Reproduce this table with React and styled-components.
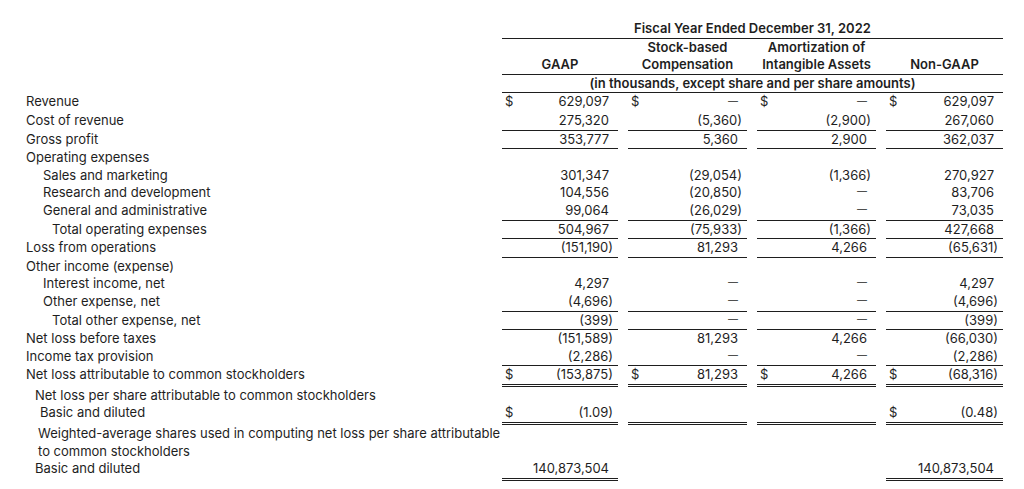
import React from 'react'
import styled, { createGlobalStyle } from 'styled-components'

const GlobalStyle = createGlobalStyle`
  html, body {
    margin: 0;
    padding: 0;
    background: #ffffff;
  }
  body {
    font-family: Inter, "Liberation Sans", Arial, sans-serif;
    color: #1e1e1e;
  }
`

const COLS = '466px 116px 119px 119px 117px'
const NUM_COLS = '116px 119px 119px 117px'

const Page = styled.div`
  padding: 20px 0 0 26px;
  font-size: 13px;
  line-height: 17.6px;
`

const Row = styled.div`
  display: grid;
  grid-template-columns: ${COLS};
  column-gap: 10px;
`

const Spanner = styled.div`
  grid-column: 2 / -1;
  text-align: center;
  font-weight: 600;
  border-bottom: 1px solid #1e1e1e;
`

const HeadGroup = styled.div`
  grid-column: 2 / -1;
  display: grid;
  grid-template-columns: ${NUM_COLS};
  column-gap: 10px;
  align-items: end;
  border-bottom: 1px solid #1e1e1e;
`

const HeadCell = styled.div`
  text-align: center;
  font-weight: 600;
`

const Label = styled.div`
  padding-left: ${(p) => p.$indent || 0}px;
  white-space: nowrap;
`

const Cell = styled.div`
  display: flex;
  align-items: baseline;
  justify-content: space-between;
  padding: 0 9px 0 3px;
  border-bottom: ${(p) =>
    p.$line === 'double' ? '3px double #1e1e1e' : p.$line === 'single' ? '1px solid #1e1e1e' : 'none'};
`

const Paren = styled.span`
  margin-right: -4px;
`

const Nil = styled.span`
  font-size: 10px;
  position: relative;
  top: -1px;
`

const Amount = ({ v }) => {
  if (v === '-') return <Nil>{'\u2014'}</Nil>
  if (v && v.endsWith(')')) {
    return (
      <span>
        {v.slice(0, -1)}
        <Paren>)</Paren>
      </span>
    )
  }
  return <span>{v}</span>
}

const D = '-'

const rows = [
  { label: 'Revenue', dollar: [1, 1, 1, 1], vals: ['629,097', D, D, '629,097'] },
  { label: 'Cost of revenue', vals: ['275,320', '(5,360)', '(2,900)', '267,060'], line: 'single' },
  { label: 'Gross profit', vals: ['353,777', '5,360', '2,900', '362,037'], line: 'single' },
  { label: 'Operating expenses' },
  { label: 'Sales and marketing', indent: 17, vals: ['301,347', '(29,054)', '(1,366)', '270,927'] },
  { label: 'Research and development', indent: 17, vals: ['104,556', '(20,850)', D, '83,706'] },
  { label: 'General and administrative', indent: 17, vals: ['99,064', '(26,029)', D, '73,035'], line: 'single' },
  { label: 'Total operating expenses', indent: 26, vals: ['504,967', '(75,933)', '(1,366)', '427,668'], line: 'single' },
  { label: 'Loss from operations', vals: ['(151,190)', '81,293', '4,266', '(65,631)'], line: 'single' },
  { label: 'Other income (expense)' },
  { label: 'Interest income, net', indent: 17, vals: ['4,297', D, D, '4,297'] },
  { label: 'Other expense, net', indent: 17, vals: ['(4,696)', D, D, '(4,696)'], line: 'single' },
  { label: 'Total other expense, net', indent: 26, vals: ['(399)', D, D, '(399)'], line: 'single' },
  { label: 'Net loss before taxes', vals: ['(151,589)', '81,293', '4,266', '(66,030)'] },
  { label: 'Income tax provision', vals: ['(2,286)', D, D, '(2,286)'], line: 'single' },
  {
    label: 'Net loss attributable to common stockholders',
    dollar: [1, 1, 1, 1],
    vals: ['(153,875)', '81,293', '4,266', '(68,316)'],
    line: 'double',
  },
  { label: 'Net loss per share attributable to common stockholders', indent: 9 },
  { label: 'Basic and diluted', indent: 14, dollar: [1, 0, 0, 1], vals: ['(1.09)', '', '', '(0.48)'], line: 'double' },
  {
    label: (
      <>
        Weighted-average shares used in computing net loss per share attributable
        <br />
        to common stockholders
      </>
    ),
    indent: 12,
  },
  {
    label: 'Basic and diluted',
    indent: 9,
    vals: ['140,873,504', '', '', '140,873,504'],
    line: ['double', '', '', 'double'],
  },
]

const DataRow = ({ row }) => {
  const vals = row.vals || ['', '', '', '']
  const dollar = row.dollar || [0, 0, 0, 0]
  return (
    <Row>
      <Label $indent={row.indent}>{row.label}</Label>
      {vals.map((v, i) => (
        <Cell key={i} $line={Array.isArray(row.line) ? row.line[i] : row.line}>
          <span>{dollar[i] ? '$' : ''}</span>
          <Amount v={v} />
        </Cell>
      ))}
    </Row>
  )
}

export default function App() {
  return (
    <Page>
      <GlobalStyle />
      <Row>
        <Spanner>Fiscal Year Ended December 31, 2022</Spanner>
      </Row>
      <Row>
        <HeadGroup>
          <HeadCell>GAAP</HeadCell>
          <HeadCell>
            Stock-based
            <br />
            Compensation
          </HeadCell>
          <HeadCell>
            Amortization of
            <br />
            Intangible Assets
          </HeadCell>
          <HeadCell>Non-GAAP</HeadCell>
        </HeadGroup>
      </Row>
      <Row>
        <Spanner>(in thousands, except share and per share amounts)</Spanner>
      </Row>
      {rows.map((r, i) => (
        <DataRow key={i} row={r} />
      ))}
    </Page>
  )
}
